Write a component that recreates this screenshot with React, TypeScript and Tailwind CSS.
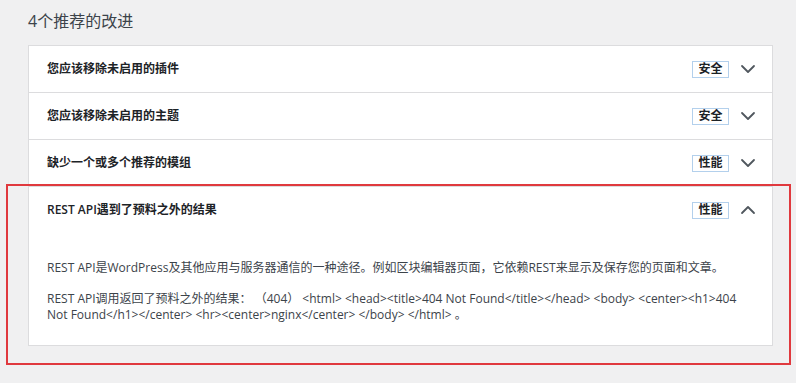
import { ChevronDown, ChevronUp } from "lucide-react";

type Item = { title: string; badge: string; open?: boolean };

const items: Item[] = [
  { title: "您应该移除未启用的插件", badge: "安全" },
  { title: "您应该移除未启用的主题", badge: "安全" },
  { title: "缺少一个或多个推荐的模组", badge: "性能" },
  { title: "REST API遇到了预料之外的结果", badge: "性能", open: true },
];

function Badge({ label }: { label: string }) {
  return (
    <span className="flex h-[17px] w-[37px] items-center justify-center border border-[#b3d0ec] text-[12px] font-semibold text-[#1d2327]">
      {label}
    </span>
  );
}

function Row({ item }: { item: Item }) {
  return (
    <div className="border-b border-[#dcdcde] last:border-b-0">
      <div className="flex h-[46px] items-center pl-[18px] pr-[12px]">
        <span className="flex-1 text-[12px] font-semibold text-[#1d2327]">{item.title}</span>
        <Badge label={item.badge} />
        {item.open ? (
          <ChevronUp className="ml-[7px] h-[24px] w-[24px] text-[#50575e]" strokeWidth={1.8} />
        ) : (
          <ChevronDown className="ml-[7px] h-[24px] w-[24px] text-[#50575e]" strokeWidth={1.8} />
        )}
      </div>
      {item.open && (
        <div className="px-[18px] pt-[27px] pb-[22px] text-[12px] leading-[16px] text-[#3c434a]">
          <p className="mb-[15px]">
            REST API是WordPress及其他应用与服务器通信的一种途径。例如区块编辑器页面，它依赖REST来显示及保存您的页面和文章。
          </p>
          <p>
            REST API调用返回了预料之外的结果： （404） &lt;html&gt; &lt;head&gt;&lt;title&gt;404 Not Found&lt;/title&gt;&lt;/head&gt; &lt;body&gt; &lt;center&gt;&lt;h1&gt;404 Not Found&lt;/h1&gt;&lt;/center&gt; &lt;hr&gt;&lt;center&gt;nginx&lt;/center&gt; &lt;/body&gt; &lt;/html&gt; 。
          </p>
        </div>
      )}
    </div>
  );
}

export default function App() {
  return (
    <div
      className="relative h-[383px] w-[796px] bg-[#f0f0f1] pl-[28px] pr-[23px] pt-[10px]"
      style={{ fontFamily: '"Open Sans", "Noto Sans CJK SC", sans-serif' }}
    >
      <h2 className="mb-[12px] text-[16px] leading-[23px] text-[#3c434a]">4个推荐的改进</h2>
      <div className="border border-[#dcdcde] bg-white">
        {items.map((it) => (
          <Row key={it.title} item={it} />
        ))}
      </div>
      <div className="pointer-events-none absolute left-[6px] top-[184px] h-[181px] w-[785px] border-[2px] border-[#e0393e]" />
    </div>
  );
}
